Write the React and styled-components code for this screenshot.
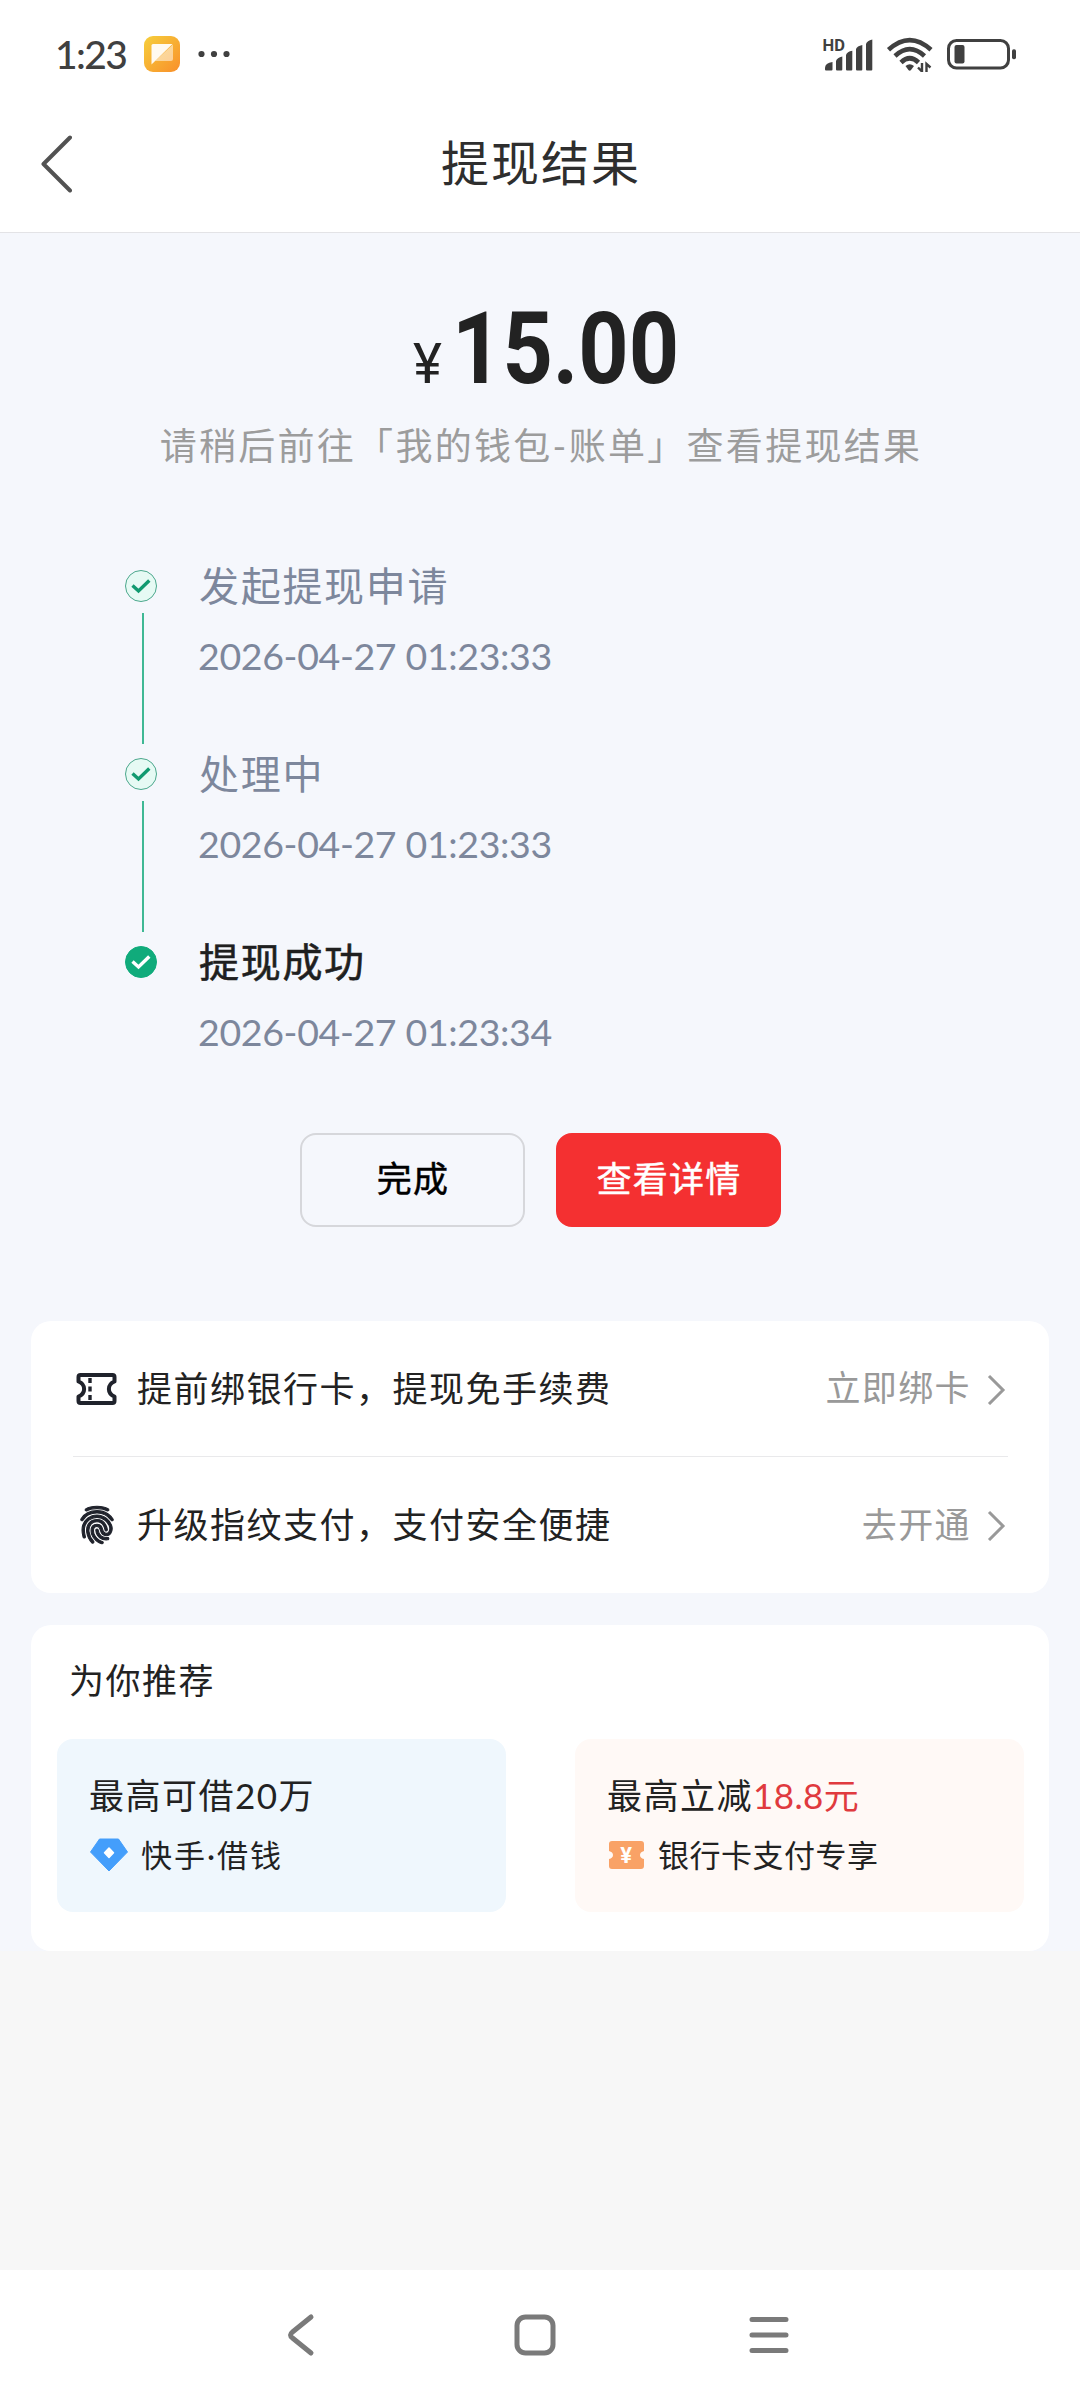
import React from 'react'
import styled, { createGlobalStyle } from 'styled-components'
import { IoFingerPrint } from 'react-icons/io5'


const GlobalStyle = createGlobalStyle`
* { box-sizing: border-box; }
body {
margin: 0;
background: #ffffff;
font-family: Lato, "Noto Sans CJK SC", sans-serif;
-webkit-font-smoothing: antialiased; }`;

const Container = styled.div`
width: 1080px;
height: 2400px;
display: flex;
flex-direction: column;
background: #f7f7f7;
white-space: nowrap;
overflow: hidden; `;

/* status bar */
const StatusBar = styled.div`
height: 96px;
padding: 12px 63px 0 55px;
display: flex;
align-items: center;
justify-content: space-between;
background: #ffffff;
color: #404040; `;
const StatusGroup = styled.div`
display: flex;
align-items: center;
gap: ${props => props.$gap}px; `;
const Clock = styled.span`
font-size: 39px;
font-weight: 500;
line-height: 40px;
width: 72px;
letter-spacing: -1.6px; `;

/* header */
const Header = styled.header`
height: 137px;
padding: 0 38px 0 40px;
display: grid;
grid-template-columns: 32px 1fr 32px;
align-items: center;
background: #ffffff;
border-bottom: 1px solid #e3e3e6; `;
const Title = styled.h1`
margin: 0 0 3px;
font-size: 48px;
font-weight: 400;
line-height: 60px;
letter-spacing: 2px;
text-align: center;
color: #2e2e2e; `;

const Main = styled.main`
height: 1718px;
padding: 80px 31px 0;
display: flex;
flex-direction: column;
background: #f5f7fc; `;
const Amount = styled.div`
display: flex;
justify-content: center;
align-items: baseline;
height: 72px;
line-height: 72px;
font-family: Roboto, sans-serif;
color: #222222; `;
const Currency = styled.span`
font-size: 55px;
font-weight: 400;
margin-right: 10px; `;
const Value = styled.span`
font-size: 101px;
font-weight: 700;
width: 215px;
transform: scaleX(0.87);
transform-origin: left;
letter-spacing: 0px; `;
const Hint = styled.p`
margin: 37px 0 0 2px;
font-size: 37px;
line-height: 48px;
letter-spacing: 2.3px;
text-align: center;
color: #9c9c9c; `;

/* progress */
const Steps = styled.div`
margin-top: 97px;
padding-left: 94px;
display: flex;
flex-direction: column; `;
const Step = styled.div`
height: 188px;
display: flex;
gap: 42px; `;
const Marker = styled.div`
width: 32px;
padding-top: 3px;
display: flex;
flex-direction: column;
align-items: center;
svg { flex: none; }`;
const Line = styled.div`
width: 2px;
height: 131px;
margin: 11px 0 0 3px;
background: #3fb894; `;
const StepTitle = styled.div`
font-size: 40px;
font-weight: 400;
-webkit-text-stroke: ${props => props.$active ? "0.6px" : "0"};
line-height: 38px;
letter-spacing: 1.7px;
color: ${props => props.$active ? "#1f1f1f" : "#7d879c"}; `;
const StepTime = styled.div`
margin: 31px 0 0 -1px;
font-size: 37.5px;
line-height: 40px;
letter-spacing: -0.36px;
color: #7d879c; `;

/* buttons */
const Actions = styled.div`
margin-top: 2px;
display: flex;
justify-content: center;
gap: 31px; `;
const Button = styled.button`
width: 225px;
height: 94px;
padding: 0 0 8px 2px;
border-radius: 16px;
border: 2px solid ${props => props.$primary ? "#f43031" : "#d6d7db"};
background: ${props => props.$primary ? "#f43031" : "transparent"};
color: ${props => props.$primary ? "#ffffff" : "#000000"};
font-family: inherit;
font-size: 35px;
font-weight: 400;
-webkit-text-stroke: 0.5px;
letter-spacing: 1.2px; `;

/* cards */
const Card = styled.section`
background: #ffffff;
border-radius: 20px; `;
const LinkCard = styled(Card)`
height: 272px;
margin-top: 94px;
padding: 0 41px 0 42px; `;
const LinkRow = styled.div`
height: 136px;
display: flex;
align-items: center;
border-bottom: ${props => props.$last ? "none" : "1px solid #e9e9eb"}; `;
const RowIcon = styled.div`
width: 41px;
margin: 0 20px 0 3px;
display: flex;
justify-content: center;
color: #20232c; `;
const RowText = styled.span`
flex: 1;
padding-bottom: 2px;
font-size: 35px;
line-height: 48px;
letter-spacing: 1.5px;
color: #222222; `;
const RowAction = styled.span`
margin-right: 16px;
padding-bottom: 3px;
font-size: 35px;
font-weight: 400;
line-height: 48px;
letter-spacing: 1.4px;
color: #999999; `;

const RecommendCard = styled(Card)`
height: 326px;
margin-top: 32px;
padding: 31px 25px 0 26px; `;
const RecommendTitle = styled.h2`
margin: 0 0 35px 12px;
font-size: 35px;
font-weight: 400;
line-height: 48px;
letter-spacing: 1.5px;
color: #222222; `;
const Tiles = styled.div`
display: flex;
justify-content: space-between; `;
const Tile = styled.div`
width: 449px;
height: 173px;
padding: 32px 32px 0;
border-radius: 16px;
background: ${props => props.$bg}; `;
const TileTitle = styled.div`
font-size: 35px;
font-weight: 400;
line-height: 48px;
letter-spacing: 1.5px;
color: #222222; `;
const Highlight = styled.span`
color: #e03a3e;
letter-spacing: 0.4px; `;
const TileSub = styled.div`
margin-top: 14px;
display: flex;
align-items: center;
gap: 13px;
font-size: 31px;
line-height: 44px;
letter-spacing: ${props => props.$spacing || 0.5}px;
color: #222222; `;

/* system navigation */
const Blank = styled.div`
flex: 1; `;
const NavBar = styled.nav`
height: 130px;
padding: 0 290px 0 284px;
display: flex;
align-items: center;
justify-content: space-between;
background: #ffffff; `;


const AppBadge = () => (
    <svg width="36" height="36" viewBox="0 0 36 36">
        <defs>
            <linearGradient id="badge" x1="0" y1="0" x2="1" y2="1">
                <stop offset="0" stopColor="#f6cf3c" />
                <stop offset="1" stopColor="#f98f2a" />
            </linearGradient>
        </defs>
        <rect width="36" height="36" rx="9" fill="url(#badge)" />
        <path d="M29 8.500V23q0 2-2 2H11Z" fill="#fff" opacity="0.5" />
        <path d="M9 8H28.500L7.500 28.500V9.500Q7.500 8 9 8Z" fill="#fffaf0" />
    </svg>
)

const MoreDots = () => (
    <svg width="33" height="8" viewBox="0 0 33 8" fill="#404040">
        <circle cx="4.500" cy="4" r="3.1" />
        <circle cx="17" cy="4" r="3.1" />
        <circle cx="29.500" cy="4" r="3.1" />
    </svg>
)

const Signal = () => (
    <svg width="51" height="36" viewBox="0 0 51 36" fill="#404040">
        <text x="-0.500" y="14.500" fontSize="16.500" fontWeight="700" fontFamily="Roboto">HD</text>
        <path d="M2 32Q2 27 9.500 26V33.500Q9.500 34.500 8.500 34.500H3Q2 34.500 2 33.500Z" />
        <path d="M13 25Q14 21.500 19.300 20.500V33.500Q19.300 34.500 18.300 34.500H14Q13 34.500 13 33.500Z" />
        <path d="M23 19Q24 15.500 29.300 14.800V33.500Q29.300 34.500 28.300 34.500H24Q23 34.500 23 33.500Z" />
        <path d="M33 13Q34 10 39.300 9V33.500Q39.300 34.500 38.300 34.500H34Q33 34.500 33 33.500Z" />
        <path d="M43 8Q44 4.500 49.300 3.500V33.500Q49.300 34.500 48.300 34.500H44Q43 34.500 43 33.500Z" />
    </svg>
)

const Wifi = () => (
    <svg width="48" height="36" viewBox="0 0 48 36" fill="none" stroke="#404040" strokeWidth="4.600">
        <path d="M2.500 13.800Q23.700 -5.600 45 13.800" />
        <path d="M9 20Q23.700 6.400 38.500 20" />
        <path d="M15 26.500Q23.700 18 32.500 26.500" />
        <path d="M19.500 30Q23.700 26.500 28 30L25 34Q23.700 35.500 22.400 34Z" fill="#404040" stroke="none" />
        <path d="M36 27V35.500L32 31.500M40.500 36V28L44.500 31.500" strokeWidth="2.400" />
    </svg>
)

const Battery = () => (
    <svg width="71" height="32" viewBox="-1 0 71 32">
        <rect x="1.500" y="2.500" width="60" height="27.500" rx="8" fill="none" stroke="#404040" strokeWidth="3" />
        <rect x="7.500" y="7" width="10" height="18.500" rx="2" fill="#404040" />
        <rect x="65" y="11.300" width="4" height="10" rx="1.800" fill="#404040" />
    </svg>
)

const BackIcon = () => (
    <svg width="32" height="60" viewBox="0 0 32 60" fill="none" stroke="#525252" strokeWidth="4" strokeLinecap="round" strokeLinejoin="round">
        <path d="M30 3.500L3.500 30L30 56.500" />
    </svg>
)

const CheckIcon = ({ solid }) => (
    <svg width="32" height="32" viewBox="0 0 32 32">
        <circle cx="16" cy="16" r="15.500" fill={solid ? "#10ab7b" : "#e6faf4"} stroke={solid ? "#10ab7b" : "#4ba78c"} />
        <path d="M7.500 15.500L13.500 21L24.300 10.500" fill="none" stroke={solid ? "#ffffff" : "#119a70"} strokeWidth="3.400" />
    </svg>
)

const TicketIcon = () => (
    <svg width="41" height="34" viewBox="0 0 41 34" fill="none" stroke="currentColor" strokeWidth="4">
        <path d="M4.500 3H36.500Q38.500 3 38.500 5V9.500C31 12.500 31 21.500 38.500 24.500V29Q38.500 31 36.500 31H4.500Q2.500 31 2.500 29V24.500C10 21.500 10 12.500 2.500 9.500V5Q2.500 3 4.500 3Z" strokeLinejoin="round" />
        <path d="M14 6V11M14 14.500V19.500M14 23V28" strokeWidth="3.400" />
    </svg>
)

const Chevron = () => (
    <svg width="21" height="32" viewBox="0 0 21 32" fill="none" stroke="#999999" strokeWidth="3">
        <path d="M2 3L16 17L2 31" />
    </svg>
)

const DiamondIcon = () => (
    <svg width="39" height="34" viewBox="-1 0 39 34">
        <path d="M9.500 1H28.500L37.500 14L19 33L0.500 14Z" fill="#449efb" stroke="#449efb" strokeLinejoin="round" />
        <path d="M19 10L23.500 14.700L19 19.400L14.500 14.700Z" fill="#fff" stroke="#fff" strokeWidth="1.500" strokeLinejoin="round" />
    </svg>
)

const CouponIcon = () => (
    <svg width="38" height="30" viewBox="0 0 38 30">
        <path d="M5 1H34Q37 1 37 4V11Q33 12 33 15Q33 18 37 19V26Q37 29 34 29H5Q2 29 2 26V19Q6 18 6 15Q6 12 2 11V4Q2 1 5 1Z" fill="#f9a266" />
        <text x="19.500" y="23" fontSize="22" fontWeight="700" fontFamily="Roboto" textAnchor="middle" fill="#fff">¥</text>
    </svg>
)

const steps = [
    { title: "发起提现申请", time: "2026-04-27 01:23:33" },
    { title: "处理中", time: "2026-04-27 01:23:33" },
    { title: "提现成功", time: "2026-04-27 01:23:34" },
]

const App = () => {
    return (
        <Container>
            <GlobalStyle />
            <StatusBar>
                <StatusGroup $gap={17}>
                    <Clock>1:23</Clock>
                    <AppBadge />
                    <MoreDots />
                </StatusGroup>
                <StatusGroup $gap={12}>
                    <Signal />
                    <Wifi />
                    <Battery />
                </StatusGroup>
            </StatusBar>
            <Header>
                <BackIcon />
                <Title>提现结果</Title>
            </Header>
            <Main>
                <Amount>
                    <Currency>¥</Currency>
                    <Value>15.00</Value>
                </Amount>
                <Hint>请稍后前往「我的钱包-账单」查看提现结果</Hint>
                <Steps>
                    {steps.map((step, i) => {
                        const last = i === steps.length - 1
                        return (
                            <Step key={step.title}>
                                <Marker>
                                    <CheckIcon solid={last} />
                                    {!last && <Line />}
                                </Marker>
                                <div>
                                    <StepTitle $active={last}>{step.title}</StepTitle>
                                    <StepTime>{step.time}</StepTime>
                                </div>
                            </Step>
                        )
                    })}
                </Steps>
                <Actions>
                    <Button>完成</Button>
                    <Button $primary>查看详情</Button>
                </Actions>
                <LinkCard>
                    <LinkRow>
                        <RowIcon><TicketIcon /></RowIcon>
                        <RowText>提前绑银行卡，提现免手续费</RowText>
                        <RowAction>立即绑卡</RowAction>
                        <Chevron />
                    </LinkRow>
                    <LinkRow $last>
                        <RowIcon><IoFingerPrint size={40} stroke="currentColor" strokeWidth={14} /></RowIcon>
                        <RowText>升级指纹支付，支付安全便捷</RowText>
                        <RowAction>去开通</RowAction>
                        <Chevron />
                    </LinkRow>
                </LinkCard>
                <RecommendCard>
                    <RecommendTitle>为你推荐</RecommendTitle>
                    <Tiles>
                        <Tile $bg="#eff7fd">
                            <TileTitle>最高可借20万</TileTitle>
                            <TileSub $spacing={2}><DiamondIcon />快手·借钱</TileSub>
                        </Tile>
                        <Tile $bg="#fff9f6">
                            <TileTitle>最高立减<Highlight>18.8元</Highlight></TileTitle>
                            <TileSub><CouponIcon />银行卡支付专享</TileSub>
                        </Tile>
                    </Tiles>
                </RecommendCard>
            </Main>
            <Blank />
            <NavBar>
                <svg width="38" height="44" viewBox="0 0 38 44" fill="none" stroke="#7a7a7a" strokeWidth="5" strokeLinecap="round">
                    <path d="M27 4L8.500 19Q4.500 22 8.500 25L27 40" />
                </svg>
                <svg width="42" height="42" viewBox="0 0 42 42" fill="none" stroke="#7a7a7a" strokeWidth="5">
                    <rect x="3" y="3" width="36" height="36" rx="8.500" />
                </svg>
                <svg width="42" height="42" viewBox="0 0 42 42" fill="none" stroke="#7a7a7a" strokeWidth="5" strokeLinecap="round">
                    <path d="M4 5.500H38M4 21H38M4 36.500H38" />
                </svg>
            </NavBar>
        </Container>
    )
}

export default App
